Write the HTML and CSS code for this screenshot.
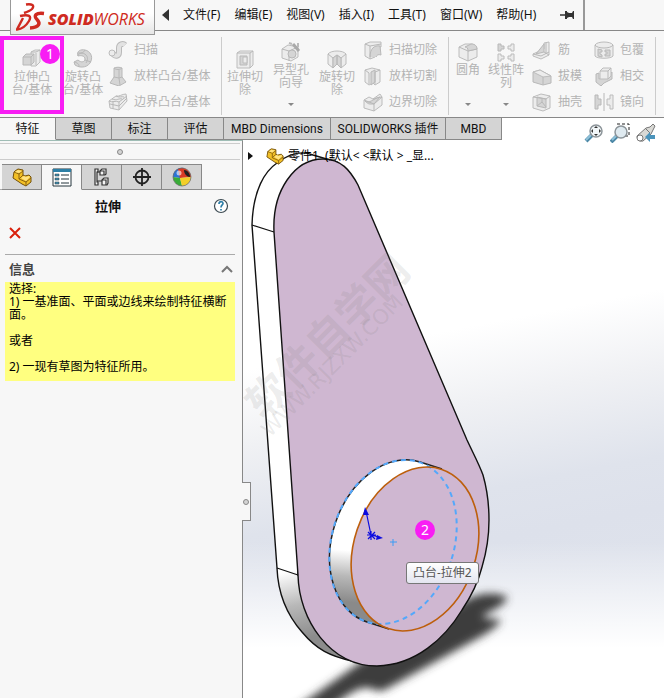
FILE: index.html
```
<!DOCTYPE html>
<html lang="zh-CN">
<head>
<meta charset="utf-8">
<title>SOLIDWORKS</title>
<link rel="stylesheet" href="styles.css">
</head>
<body>
<div class="app">
  <header class="menubar">
    <div class="logo">
      <svg class="logo-mark" viewBox="0 0 29 28" width="29" height="28" aria-hidden="true">
        <path d="M10 1.500c6-1 9 1 6 4.500-2 2-5 3-8 4" fill="none" stroke="#cf2a20" stroke-width="2.400"/>
        <path d="M4 13c9-2 12 0 9 5-3 5-7 8-12 8.500L7 15" fill="none" stroke="#cf2a20" stroke-width="2.400"/>
        <path d="M28 10.500c-8-1-11 2-7 6s2 8-7 8.500" fill="none" stroke="#cf2a20" stroke-width="3.400"/>
      </svg>
      <span class="logo-text"><b>SOLID</b>WORKS</span>
    </div>
    <nav class="menus">
      <button class="back" aria-label="收起菜单"><svg viewBox="0 0 7 12" width="7" height="12"><path d="M7 0v12L0 6z" fill="#333"/></svg></button>
      <button>文件(F)</button>
      <button>编辑(E)</button>
      <button>视图(V)</button>
      <button>插入(I)</button>
      <button>工具(T)</button>
      <button>窗口(W)</button>
      <button>帮助(H)</button>
      <button class="pin" aria-label="固定"><svg viewBox="0 0 15 10" width="15" height="10"><path d="M0 5h6" stroke="#333" stroke-width="1.500"/><path d="M5 1h2v1l2 1h3l1-2h1v8h-1l-1-2H9L7 8v1H5z" fill="#333"/></svg></button>
    </nav>
  </header>

  <div class="ribbon">
    <div class="group group-boss">
      <button class="big picked">
        <svg viewBox="0 0 20 20" width="20" height="20"><path class="lt" d="M9 3l4-2h5v12l-4 4H9z"/><path class="md" d="M1 8l3-3h8v8l-3 3H1z"/><path class="ln" d="M1 8h8v8M9 8l3-3M14 4v12M9 3h5l4-2"/></svg>
        <span>拉伸凸<br>台/基体</span>
        <i class="marker">1</i>
      </button>
      <button class="big second">
        <svg viewBox="0 0 20 20" width="20" height="20"><path class="md" d="M5 7C3 2 8 0 12 1c5 1 8 6 6 11-2 6-10 8-16 4l-1-3 4-2c3 3 7 2 7-1 0-3-4-4-7-3z"/><path class="ln" d="M1 13c5 1 5 3 5 5M5 7c0-3 5-4 8-1 2 2 2 5 0 8M12 1c-1 3-4 3-7 3M12 11l6 2"/></svg>
        <span>旋转凸<br>台/基体</span>
      </button>
      <div class="stack">
        <button><svg viewBox="0 0 20 20" width="20" height="20"><path d="M4 12c3 6 7 4 7 0V8c0-4 4-5 6-3" fill="none" stroke="#b9b9b9" stroke-width="6"/><path d="M4 12c3 6 7 4 7 0V8c0-4 4-5 6-3" fill="none" stroke="#e2e2e2" stroke-width="4"/><circle class="lt" cx="4" cy="13" r="3"/></svg>扫描</button>
        <button><svg viewBox="0 0 20 20" width="20" height="20"><path class="md" d="M6 2c2-1 6-1 8 0v9l4 5-7 4-9-3 4-6z"/><path class="ln" d="M6 2c2 2 6 2 8 0M11 4v8l1 7M6 11l5 1 3-1"/></svg>放样凸台/基体</button>
        <button><svg viewBox="0 0 20 20" width="20" height="20"><path class="lt" d="M1 9l7-5c3 1 6-2 10-2l1 7-8 9-9-2z"/><path class="ln" d="M1 9c4 2 6-1 10 1l8-6M11 10v8M4 7c5 2 7-1 10 0M8 4c3 2 6 0 8 1M2 12l9 2 8-8M5 9v8"/></svg>边界凸台/基体</button>
      </div>
    </div>
    <div class="group group-cut">
      <button class="big">
        <svg viewBox="0 0 20 20" width="20" height="20"><path class="lt" d="M2 4l3-2h13v14l-3 3H2z"/><path class="ln" d="M2 4h13v15M15 4l3-2"/><path class="md" d="M5 7h7v9H5z"/><path class="lt" d="M8 8h4v6H8z"/></svg>
        <span>拉伸切<br>除</span>
      </button>
      <button class="big drop up">
        <svg viewBox="0 0 20 20" width="20" height="20"><path class="lt" d="M1 7l6-4 10 2v10l-7 4-9-3z"/><path class="ln" d="M1 7l7 2v10M8 9l9-4"/><circle class="md" cx="11" cy="12" r="4"/><path d="M12 2l6 7" stroke="#aaa" stroke-width="3"/><path d="M17 1v4M8 1l3 1" stroke="#bbb" stroke-width="2"/></svg>
        <span>异型孔<br>向导</span>
      </button>
      <button class="big">
        <svg viewBox="0 0 20 20" width="20" height="20"><path class="lt" d="M1 5c3-4 15-4 18 0v10l-5 4V9l-4-3-4 3v10l-5-4z"/><path class="md" d="M6 9l4-3v9l-4 4zM10 6l4 3v10l-4-4z"/><path class="ln" d="M1 5l5 4M19 5l-5 4"/></svg>
        <span>旋转切<br>除</span>
      </button>
      <div class="stack">
        <button><svg viewBox="0 0 20 20" width="20" height="20"><path class="lt" d="M2 4l5-2h11v5c-5 0-6 4-6 10l-5 2-5-3z"/><path class="md" d="M7 17C7 9 11 5 17 6l1 9c-3-1-4 0-5 2"/><path class="ln" d="M2 4l5 2v13M7 6l11-2"/></svg>扫描切除</button>
        <button><svg viewBox="0 0 20 20" width="20" height="20"><path class="lt" d="M2 4l7-2 8 2v12l-5 3-2-2-4 2-4-3z"/><path class="md" d="M8 6l4-2v12l-4 3z"/><path class="ln" d="M2 4l4 3v11M12 6v12M12 6l5-2"/></svg>放样切割</button>
        <button><svg viewBox="0 0 20 20" width="20" height="20"><path class="lt" d="M1 8l5-3 4 2 7-5 2 3v8l-8 6-10-3z"/><path class="md" d="M2 9c5 3 7-2 15-4l-6 7c-4 0-5 1-9-3z"/><path class="ln" d="M1 8l10 4v7M19 5l-8 7M10 7c2 0 5-2 9-2"/></svg>边界切除</button>
      </div>
    </div>
    <div class="group group-feature">
      <button class="big drop up">
        <svg viewBox="0 0 20 20" width="20" height="20"><path class="lt" d="M1 5l6-3h6c4 0 6 3 6 6v7l-9 4-9-4z"/><path class="ln" d="M1 5l9 4v10M10 9l9-2"/><path class="md" d="M10 9c0-3-1-4-3-4l6-3c4 0 6 2 6 5z"/></svg>
        <span>圆角</span>
      </button>
      <button class="big drop up">
        <svg viewBox="0 0 20 20" width="20" height="20"><g class="lt"><path class="md" d="M2 2h3v2h3v3H5v2H2z"/><path d="M12 4h3V2h3v7h-3V7h-3zM2 12h3v2h3v3H5v2H2zM12 14h3v-2h3v7h-3v-2h-3z"/></g></svg>
        <span>线性阵<br>列</span>
      </button>
      <div class="stack">
        <button><svg viewBox="0 0 20 20" width="20" height="20"><path class="lt" d="M1 14l11-5V3l5-1v13l-8 4-8-3z"/><path class="md" d="M4 14L12 4v8z"/><path class="ln" d="M12 12l5 3M1 14l8 2 8-4M14 3v11"/></svg>筋</button>
        <button><svg viewBox="0 0 20 20" width="20" height="20"><path class="md" d="M1 6l7-2 11 6v7l-8 2-10-3z"/><path class="lt" d="M1 6l7-2 11 6-8 1z"/><path class="ln" d="M11 11v8"/></svg>拔模</button>
        <button><svg viewBox="0 0 20 20" width="20" height="20"><path class="lt" d="M1 5l8-3 9 2v12l-7 3-10-3z"/><path class="md" d="M5 5l9 2v9l-9-2z"/><path class="ln" d="M1 5l13 2 4-3M5 14l5-4 4 5M10 6v4"/></svg>抽壳</button>
      </div>
      <div class="stack stack-last">
        <button><svg viewBox="0 0 20 20" width="20" height="20"><path class="lt" d="M1 5c2-4 16-4 18 0v11c-2 3-16 3-18 0z"/><path class="ln" d="M1 5c2 4 16 4 18 0"/><path class="md" d="M4 9l4 1v2H6v2l2 1v2l-4-1zM11 10h5v6h-5v-2h2v-2h-2z"/></svg>包覆</button>
        <button><svg viewBox="0 0 20 20" width="20" height="20"><path class="md" d="M2 8l3-1v6l9-3 4-4v7l-8 4-3 3-5-4z"/><path class="lt" d="M6 5l3-3h8v8l-3 3H6z"/><path class="ln" d="M6 5h8v8M14 5l3-3"/></svg>相交</button>
        <button><svg viewBox="0 0 20 20" width="20" height="20"><path class="md" d="M1 3h3v4h3v6H4v4H1z"/><path class="ln" d="M10 1v18"/><path class="lt" d="M19 3h-3v4h-3v6h3v4h3z"/></svg>镜向</button>
      </div>
    </div>
  </div>

  <div class="tabrow">
    <nav class="tabs">
      <button class="tab active">特征</button>
      <button class="tab">草图</button>
      <button class="tab">标注</button>
      <button class="tab">评估</button>
      <button class="tab wide">MBD Dimensions</button>
      <button class="tab plugin">SOLIDWORKS 插件</button>
      <button class="tab">MBD</button>
    </nav>
    <div class="viewtools">
      <button aria-label="整屏显示全图"><svg viewBox="0 0 20 20" width="20" height="20"><path d="M2 18l6-6" stroke="#4b87a5" stroke-width="4"/><path d="M2 17l5-5" stroke="#8fc1da" stroke-width="2"/><circle cx="12" cy="8" r="6" fill="#f1f6f8" stroke="#8c9499" stroke-width="1.500"/><path d="M12 3l2 2h-4zM12 13l2-2h-4zM7 8l2-2v4zM17 8l-2-2v4z" fill="#333"/></svg></button>
      <button aria-label="局部放大"><svg viewBox="0 0 20 20" width="20" height="20"><path d="M7 1h12v12h-4" fill="none" stroke="#222" stroke-dasharray="3 2"/><path d="M1 19l6-6" stroke="#4b87a5" stroke-width="4"/><path d="M2 17l5-5" stroke="#8fc1da" stroke-width="2"/><circle cx="11" cy="9" r="6" fill="#dfeaf0" stroke="#8c9499" stroke-width="1.500"/></svg></button>
      <button aria-label="上一视图"><svg viewBox="0 0 20 20" width="20" height="20"><path d="M1 13l9-8 4-1 3-3 2 2-2 4-2 4-8 7c-4 1-6-2-6-5z" fill="#d9d9d5" stroke="#777"/><circle cx="4" cy="15" r="3" fill="#fff" stroke="#777"/><path d="M9 5l5 5" stroke="#777"/><path d="M9 14l5-5v3h5v4h-5v3z" fill="#4c94bb"/></svg></button>
    </div>
  </div>

  <main class="work">
    <aside class="panel">
      <div class="grip"><span class="dot"></span></div>
      <nav class="ptabs">
        <button class="ptab" aria-label="特征树"><svg viewBox="0 0 20 20" width="20" height="20"><path d="M2 5l1-1 3-2 5 1v5l2 1 4-1 2 2v5l-5 4-4-2-9-6z" fill="#f2bf25" stroke="#73500a"/><path d="M2 5l5 2 4-3M7 7v5l7 3 5-4M14 15v4M7 12l4-4" fill="none" stroke="#8a6310"/><path d="M3 5l3-2 4 1-3 2zM9 11l3-2 2 1 3-1 1 1-4 4z" fill="#ffe383"/></svg></button>
        <button class="ptab active" aria-label="属性"><svg viewBox="0 0 20 20" width="20" height="20"><path d="M1 2h18v17H1z" fill="#fff" stroke="#25343d"/><path d="M1 2h18v3H1z" fill="#2d7fa5"/><path d="M9 8h8M9 12h8M9 16h8" stroke="#25343d"/><path d="M3 7h4v2H3zM3 11h4v2H3zM3 15h4v2H3z" fill="#4692b4" stroke="#25343d" stroke-width=".5"/></svg></button>
        <button class="ptab" aria-label="配置"><svg viewBox="0 0 20 20" width="20" height="20"><g fill="#f4f4f4" stroke="#333" stroke-width="1.200"><path d="M3 2h3v3H5v10h1v3H3z"/><path d="M5 5h4M5 14h5"/><path d="M8 4l2-2h4v5l-1 1H8zM10 13l2-2h4v5l-1 2h-5z"/><path d="M8 4h4v4M10 13h4v5" fill="none"/></g></svg></button>
        <button class="ptab" aria-label="尺寸专家"><svg viewBox="0 0 20 20" width="20" height="20"><circle cx="10" cy="10" r="6.500" fill="none" stroke="#222" stroke-width="1.800"/><path d="M10 1v18M1 10h18" stroke="#222" stroke-width="1.800"/></svg></button>
        <button class="ptab" aria-label="外观"><svg viewBox="0 0 20 20" width="20" height="20"><path d="M8 11l4-10a9 9 0 0 0-11 9z" fill="#2d73d5"/><path d="M8 11L6 2a9 9 0 0 1 13 8z" fill="#d83b25"/><path d="M8 11l-7-1a9 9 0 0 0 9 9z" fill="#39ac38"/><path d="M8 11l11-1a9 9 0 0 1-9 9z" fill="#f3cf28"/><path d="M12 3c4 0 6 4 6 7-3 0-6-3-6-7z" fill="#222"/><circle cx="10" cy="10" r="9" fill="none" stroke="#666" stroke-width=".7"/><circle cx="7" cy="6" r="2.500" fill="#fff" opacity=".6"/></svg></button>
      </nav>
      <div class="ptitle">
        <h1>拉伸</h1>
        <button class="help" aria-label="帮助"><svg viewBox="0 0 16 16" width="16" height="16"><circle cx="8" cy="8" r="6.500" fill="#fff" stroke="#3c4a52" stroke-width="1.200"/><path d="M6 6c0-3 4-3 4-.5C10 7 8 7 8 9.500M8 11v1.500" fill="none" stroke="#2f7fa8" stroke-width="1.700"/></svg></button>
      </div>
      <button class="cancel" aria-label="取消"><svg viewBox="0 0 12 12" width="12" height="12"><path d="M1 1l10 10M11 1L1 11" stroke="#d9200b" stroke-width="2"/></svg></button>
      <section class="info">
        <div class="info-head"><h2>信息</h2><svg viewBox="0 0 12 8" width="12" height="8"><path d="M1 7l5-5 5 5" fill="none" stroke="#777" stroke-width="2"/></svg></div>
        <div class="message">
          <p>选择:</p>
          <p>1) 一基准面、平面或边线来绘制特征横断面。</p>
          <p class="gap">或者</p>
          <p class="gap">2) 一现有草图为特征所用。</p>
        </div>
      </section>
      <div class="splitter"><span class="dot"></span></div>
    </aside>

    <section class="viewport">
      <svg class="model" viewBox="243 140 421 558" preserveAspectRatio="xMinYMin meet" role="img" aria-label="凸台模型">
        <defs>
          <linearGradient id="side" gradientUnits="userSpaceOnUse" x1="284" y1="572" x2="300" y2="640"><stop offset="0" stop-color="#fff"/><stop offset=".5" stop-color="#b8b8b8"/><stop offset="1" stop-color="#8c8c8c"/></linearGradient>
          <linearGradient id="boss" gradientUnits="userSpaceOnUse" x1="338" y1="568" x2="350" y2="618"><stop offset="0" stop-color="#fff"/><stop offset=".5" stop-color="#b8b8b8"/><stop offset="1" stop-color="#8a8a8a"/></linearGradient>
          <filter id="soft" x="-20%" y="-20%" width="140%" height="140%"><feGaussianBlur stdDeviation="4"/></filter>
        </defs>
        <path d="M290 712L385 645 470 598Q488 590 506 596 511 602 484 615 480 619 500 619 502 624 482 636L388 688Q380 694 370 688 360 686 345 697L320 715z" fill="#3d3d3d" filter="url(#soft)"/>
        <path d="M252 225C253 190 265 171 277 163 290 153 303 151 313 155L337 162 300 300 298 575 352 661C330 656 317 650 302 632 287 615 278 594 277 568z" fill="url(#side)" stroke="#111" stroke-width="1.400"/>
        <path d="M274 232C272 190 295 159 323 159 341 159 350 170 358 185L467 440C474 455 479 464 483 475 487 489 489 505 489 520 489 541 485 557 482 567 478 583 470 598 462 610 445 638 416 665 377 666 330 666 299 620 298 575z" fill="#cfb7d1" stroke="#111" stroke-width="1.400"/>
        <path d="M252 225l22 7M277 568l21 7" stroke="#111" stroke-width="1.200"/>
        <g>
          <path d="M420 462l22 7-52 160-23-7z" fill="url(#boss)"/>
          <ellipse cx="393" cy="542" rx="61" ry="84" transform="rotate(18.600 393 542)" fill="url(#boss)"/>
          <ellipse cx="415" cy="549" rx="61" ry="84" transform="rotate(18.600 415 549)" fill="#cfb7d1"/>
          <path d="M367 622A61 84 18.600 0 1 420 462l22 7M367 622l22 7" fill="none" stroke="#222" stroke-width="1.500"/>
          <ellipse cx="393" cy="542" rx="61" ry="84" transform="rotate(18.600 393 542)" fill="none" stroke="#54a8fb" stroke-width="2" stroke-dasharray="5 4"/>
          <ellipse cx="415" cy="549" rx="61" ry="84" transform="rotate(18.600 415 549)" fill="none" stroke="#bd5f0c" stroke-width="1.600"/>
        </g>
        <path d="M371 535l-5-24M371 535l8 2M367 535h9M371 531v9M368 532l7 7M375 532l-7 7" stroke="#0b0be0" stroke-width="1.200"/>
        <path d="M365 507l4 8-6 0zM383 538l-7 2 1-5z" fill="#0b0be0"/>
        <path d="M390 542h7M393 539v7" stroke="#3b9cf5"/>
        <g class="watermark">
          <text transform="translate(264 421) rotate(-45)" font-size="42">软件自学网</text>
          <text class="site" transform="translate(270 438) rotate(-45)" font-size="21">WWW.RJZXW.COM</text>
        </g>
      </svg>
      <div class="tree">
        <svg viewBox="0 0 5 8" width="5" height="8"><path d="M0 0l5 4-5 4z" fill="#111"/></svg>
        <svg viewBox="0 0 20 20" width="18" height="18"><path d="M2 5l1-1 3-2 5 1v5l2 1 4-1 2 2v5l-5 4-4-2-9-6z" fill="#f2bf25" stroke="#73500a"/><path d="M2 5l5 2 4-3M7 7v5l7 3 5-4M14 15v4M7 12l4-4" fill="none" stroke="#8a6310"/><path d="M3 5l3-2 4 1-3 2zM9 11l3-2 2 1 3-1 1 1-4 4z" fill="#ffe383"/></svg>
        <span>零件1&nbsp; (默认&lt;&nbsp;&lt;默认&nbsp;&gt;&nbsp;_显...</span>
      </div>
      <i class="marker marker-two">2</i>
      <div class="tooltip">凸台-拉伸2</div>
    </section>
  </main>
</div>
</body>
</html>
```
FILE: styles.css
```
* { box-sizing: border-box; }

body {
  margin: 0;
  background: #f7f7f7;
  color: #111;
  font: 12px/16px "Noto Sans", "Noto Sans CJK SC", sans-serif;
}

button {
  margin: 0;
  padding: 0;
  border: 0;
  background: none;
  color: inherit;
  font: inherit;
  white-space: nowrap;
}

svg { display: block; flex: none; }
h1, h2, p { margin: 0; font-size: 12px; line-height: 16px; }

.app {
  display: flex;
  flex-direction: column;
  min-height: 100vh;
  overflow: hidden;
}

/* menu bar */
.menubar {
  position: relative;
  display: flex;
  height: 31px;
  border-bottom: 1px solid #888;
}

.logo {
  position: absolute;
  z-index: 2;
  top: 0;
  left: 10px;
  display: flex;
  align-items: center;
  gap: 3px;
  width: 145px;
  height: 35px;
  padding: 0 5px;
  border: 1px solid #999;
  border-top: 0;
  background: linear-gradient(#fff 40%, #e6e6e6);
}

.logo-text {
  padding-top: 4px;
  color: #cf2a20;
  font: italic 16px/20px "Open Sans", sans-serif;
}
.logo-text b { font-weight: 800; }

.menus {
  display: flex;
  align-items: center;
  gap: 14px;
  padding: 0 8px 0 162px;
  border-right: 2px solid #999;
}
.pin { margin-left: 10px; }

/* ribbon */
.ribbon {
  display: flex;
  height: 86px;
  padding: 6px 0 2px;
  color: #b3b3b3;
}

.group {
  display: flex;
  flex: none;
  border-right: 1px solid #ccc;
}
.group-boss { width: 222px; }
.group-cut { width: 227px; }
.group-feature { width: 207px; }

.big {
  position: relative;
  display: flex;
  flex-direction: column;
  align-items: center;
  flex: none;
  width: 46px;
  padding-top: 12px;
  line-height: 13px;
}
.big span { margin-top: 1px; }
.big.up { padding-top: 5px; }
.group-boss .second { width: 38px; }
.group-boss .picked {
  width: 64px;
  height: 78px;
  margin-top: -1px;
  padding-top: 9px;
  border: 4px solid #f81df4;
}
.group-feature .big { width: 38px; }

.drop::after {
  content: "";
  position: absolute;
  bottom: 9px;
  border: 3px solid transparent;
  border-top-color: #888;
  border-bottom: 0;
}

.stack {
  display: flex;
  flex-direction: column;
}
.stack button {
  display: flex;
  align-items: center;
  gap: 6px;
  height: 26px;
}
.group-boss .stack { padding-left: 6px; }
.group-cut .stack { padding-left: 3px; }
.group-feature .stack { padding-left: 7px; }
.group-feature .stack-last { padding-left: 12px; }

.lt { fill: #ececec; stroke: #bcbcbc; }
.md { fill: #d5d5d5; stroke: #b8b8b8; }
.ln { fill: none; stroke: #b8b8b8; }

.marker {
  display: block;
  width: 20px;
  height: 20px;
  border-radius: 50%;
  background: #f81df4;
  color: #fff;
  font-size: 14px;
  font-style: normal;
  line-height: 20px;
  text-align: center;
}
.picked .marker {
  position: absolute;
  top: 4px;
  right: 0;
}

/* command tabs */
.tabrow {
  display: flex;
  justify-content: space-between;
  height: 23px;
  border-top: 1px solid #888;
  background: #fff;
}
.tabs { display: flex; font-family: Roboto, "Noto Sans CJK SC", sans-serif; }
.tab {
  width: 56px;
  border-right: 1px solid #888;
  border-bottom: 1px solid #888;
  background: #d4d4d4;
}
.tab.active { border-bottom-color: #f7f7f7; background: #f7f7f7; }
.tab.wide { width: 107px; }
.tab.plugin { width: 115px; }

.viewtools {
  z-index: 1;
  display: flex;
  gap: 6px;
  height: 28px;
  padding: 2px 8px 0 0;
}

/* work area */
.work {
  display: grid;
  grid-template-columns: 243px 1fr;
  flex: 1;
}

.panel {
  position: relative;
  border-top: 1px solid #9fbdb5;
  border-right: 1px solid #888;
}

.grip {
  display: flex;
  align-items: center;
  justify-content: center;
  height: 17px;
  margin: 2px 2px 4px 0;
  border-top: 1px solid #ccc;
  border-bottom: 1px solid #ccc;
}

.dot {
  width: 6px;
  height: 6px;
  border: 1px solid #888;
  border-radius: 50%;
  background: #d4d4d4;
}

.ptabs {
  display: flex;
  height: 26px;
  padding-left: 2px;
  margin-right: 2px;
  box-shadow: inset 0 -1px #aaa;
}
.ptab {
  display: grid;
  place-items: center;
  width: 40px;
  border: 1px solid #888;
  border-left: 0;
  background: #d4d4d4;
}
.ptab.active { border-bottom-color: #f7f7f7; background: #f7f7f7; }

.ptitle {
  display: flex;
  align-items: center;
  height: 32px;
  padding-right: 13px;
}
.ptitle h1 {
  flex: 1;
  padding-left: 3px;
  font-size: 13px;
  text-align: center;
}

.cancel { display: block; margin: 5px 0 15px 9px; }

.info { margin: 0 7px 0 5px; border-top: 1px solid #aaa; }
.info-head {
  display: flex;
  align-items: center;
  justify-content: space-between;
  height: 27px;
  padding: 0 2px 0 4px;
  color: #444;
}
.info-head h2 { font-size: 13px; }

.message {
  padding: 0 4px 8px;
  background: #ffff80;
  color: #000;
}
.message p { line-height: 13px; }
.message .gap { margin-top: 13px; }

.splitter {
  position: absolute;
  z-index: 1;
  top: 341px;
  right: -9px;
  display: grid;
  place-items: center;
  width: 9px;
  height: 39px;
  border: 1px solid #888;
  border-left: 0;
  background: #f7f7f7;
}

/* graphics area */
.viewport {
  position: relative;
  background:
    linear-gradient(transparent 72%, #fff 91%),
    linear-gradient(169deg, #fff 36%, #f0f1f4 48%, #dfe3ec 62%, #dde1eb 70%, #e2e6ee 100%);
}

.model {
  position: absolute;
  inset: 0;
  width: 100%;
  height: 100%;
}

.watermark {
  fill: #777;
  fill-opacity: .15;
  font-family: "Noto Sans", "Noto Sans CJK SC", sans-serif;
  font-weight: 700;
}
.watermark .site { font-family: "DejaVu Sans", sans-serif; font-weight: 400; }

.tree {
  position: relative;
  display: flex;
  align-items: center;
  height: 32px;
  padding-left: 5px;
  color: #000;
}
.tree svg + svg { margin: 0 4px 0 13px; }

.marker-two {
  position: absolute;
  top: 380px;
  left: 172px;
}

.tooltip {
  position: absolute;
  top: 422px;
  left: 163px;
  padding: 2px 6px;
  border: 1px solid #777;
  border-radius: 3px;
  background: linear-gradient(#fff, #e4e5f0);
  color: #555;
}
```
